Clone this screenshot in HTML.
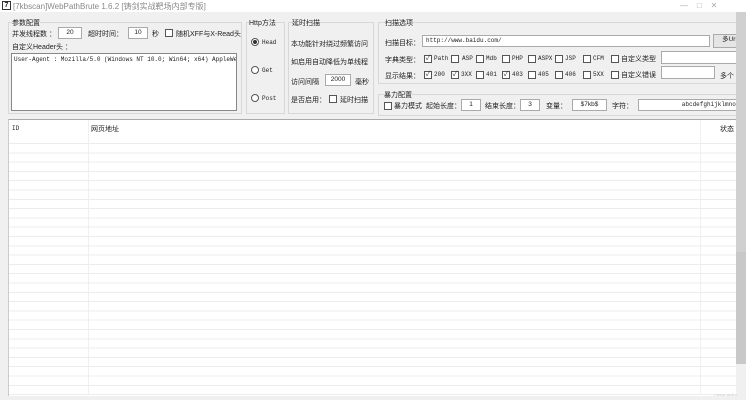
<!DOCTYPE html>
<html><head><meta charset="utf-8"><style>
*{margin:0;padding:0;box-sizing:border-box}
body{width:746px;height:400px;overflow:hidden;background:#f0f0f0;font-family:"Liberation Sans","Noto Sans CJK SC",sans-serif;font-size:7px;color:#222;position:relative}
.a{position:absolute;white-space:nowrap}
.in{position:absolute;background:#fff;border:1px solid #aaa;font-size:6.5px;text-align:center;line-height:10px}
.cb{position:absolute;width:8px;height:8px;border:1px solid #555;background:#fff;font-size:7px;line-height:6px;text-align:center;color:#333}
.rd{position:absolute;width:8px;height:8px;border:1px solid #555;border-radius:50%;background:#fff}
.grp{position:absolute;border:1px solid #d8d8d8}
.mono{font-family:"Liberation Mono","Noto Sans CJK SC",monospace;font-size:6px}
</style></head><body>
<div class="a" style="left:0;top:0;width:746px;height:12px;background:#fff"></div>
<div class="a" style="left:2px;top:1px;width:9px;height:9px;border:1px solid #333;font-size:7px;line-height:7px;text-align:center;font-weight:bold">7</div>
<div class="a" style="left:13px;top:1px;color:#888;font-size:8px">[7kbscan]WebPathBrute 1.6.2 [铸剑实战靶场内部专版]</div>
<div class="a" style="left:680px;top:1px;color:#aaa;font-size:8px">—&nbsp;&nbsp;&nbsp;&nbsp;□&nbsp;&nbsp;&nbsp;&nbsp;✕</div>

<div class="grp" style="left:8px;top:22px;width:234px;height:92px"></div>
<div class="a" style="left:12px;top:18px;background:#f0f0f0">参数配置</div>
<div class="a" style="left:12px;top:29px">并发线程数 ：</div>
<div class="in" style="left:58px;top:27px;width:24px;height:12px">20</div>
<div class="a" style="left:88px;top:29px">超时时间：</div>
<div class="in" style="left:128px;top:27px;width:20px;height:12px">10</div>
<div class="a" style="left:152px;top:29px">秒</div>
<div class="cb" style="left:165px;top:29px"></div>
<div class="a" style="left:176px;top:29px" class="mono">随机XFF与X-Read头</div>
<div class="a" style="left:12px;top:42px">自定义Header头 ：</div>
<div class="a" style="left:11px;top:53px;width:226px;height:58px;background:#fff;border:1px solid #888"></div>
<div class="a mono" style="left:14px;top:56px;width:222px;overflow:hidden">User-Agent : Mozilla/5.0 (Windows NT 10.0; Win64; x64) AppleWebKit</div>

<div class="grp" style="left:246px;top:22px;width:39px;height:92px"></div>
<div class="a" style="left:249px;top:18px;background:#f0f0f0">Http方法</div>
<div class="rd" style="left:251px;top:38px"></div><div class="a" style="left:253px;top:40px;width:4px;height:4px;border-radius:50%;background:#333"></div>
<div class="a mono" style="left:262px;top:39px">Head</div>
<div class="rd" style="left:251px;top:66px"></div><div class="a mono" style="left:262px;top:67px">Get</div>
<div class="rd" style="left:251px;top:94px"></div><div class="a mono" style="left:262px;top:95px">Post</div>

<div class="grp" style="left:288px;top:22px;width:86px;height:92px"></div>
<div class="a" style="left:292px;top:18px;background:#f0f0f0">延时扫描</div>
<div class="a" style="left:291px;top:39px">本功能针对绕过频繁访问</div>
<div class="a" style="left:291px;top:57px">如启用自动降低为单线程</div>
<div class="a" style="left:291px;top:77px">访问间隔</div>
<div class="in" style="left:325px;top:74px;width:26px;height:12px">2000</div>
<div class="a" style="left:355px;top:77px">毫秒</div>
<div class="a" style="left:291px;top:95px">是否启用：</div>
<div class="cb" style="left:329px;top:95px"></div>
<div class="a" style="left:340px;top:95px">延时扫描</div>

<div class="grp" style="left:378px;top:22px;width:362px;height:62px"></div>
<div class="a" style="left:385px;top:18px;background:#f0f0f0">扫描选项</div>
<div class="a" style="left:385px;top:38px">扫描目标：</div>
<div class="in mono" style="left:422px;top:35px;width:288px;height:12px;text-align:left;padding-left:3px">http://www.baidu.com/</div>
<div class="in" style="left:713px;top:34px;width:33px;height:14px;background:#e5e5e5">多Url</div>
<div class="a" style="left:385px;top:55px">字典类型：</div>
<div class="a" style="left:385px;top:71px">显示结果：</div>
<div class="cb" style="left:424px;top:55px">✓</div><div class="a mono" style="left:434px;top:55px">Path</div>
<div class="cb" style="left:451px;top:55px"></div><div class="a mono" style="left:462px;top:55px">ASP</div>
<div class="cb" style="left:476px;top:55px"></div><div class="a mono" style="left:486px;top:55px">Mdb</div>
<div class="cb" style="left:502px;top:55px"></div><div class="a mono" style="left:512px;top:55px">PHP</div>
<div class="cb" style="left:528px;top:55px"></div><div class="a mono" style="left:538px;top:55px">ASPX</div>
<div class="cb" style="left:555px;top:55px"></div><div class="a mono" style="left:565px;top:55px">JSP</div>
<div class="cb" style="left:583px;top:55px"></div><div class="a mono" style="left:593px;top:55px">CFM</div>
<div class="cb" style="left:611px;top:55px"></div><div class="a" style="left:621px;top:54px">自定义类型</div>
<div class="in" style="left:661px;top:51px;width:85px;height:13px"></div>
<div class="cb" style="left:424px;top:71px">✓</div><div class="a mono" style="left:434px;top:71px">200</div>
<div class="cb" style="left:451px;top:71px">✓</div><div class="a mono" style="left:461px;top:71px">3XX</div>
<div class="cb" style="left:476px;top:71px"></div><div class="a mono" style="left:486px;top:71px">401</div>
<div class="cb" style="left:502px;top:71px">✓</div><div class="a mono" style="left:512px;top:71px">403</div>
<div class="cb" style="left:528px;top:71px"></div><div class="a mono" style="left:538px;top:71px">405</div>
<div class="cb" style="left:555px;top:71px"></div><div class="a mono" style="left:565px;top:71px">406</div>
<div class="cb" style="left:583px;top:71px"></div><div class="a mono" style="left:593px;top:71px">5XX</div>
<div class="cb" style="left:611px;top:71px"></div><div class="a" style="left:621px;top:70px">自定义错误</div>
<div class="in" style="left:661px;top:66px;width:54px;height:13px"></div>
<div class="a" style="left:720px;top:71px">多个</div>

<div class="grp" style="left:378px;top:94px;width:362px;height:22px"></div>
<div class="a" style="left:384px;top:90px;background:#f0f0f0">暴力配置</div>
<div class="cb" style="left:384px;top:102px"></div><div class="a" style="left:394px;top:101px">暴力模式</div>
<div class="a" style="left:426px;top:101px">起始长度：</div>
<div class="in" style="left:461px;top:99px;width:20px;height:12px">1</div>
<div class="a" style="left:485px;top:101px">结束长度：</div>
<div class="in" style="left:520px;top:99px;width:20px;height:12px">3</div>
<div class="a" style="left:546px;top:101px">变量：</div>
<div class="in" style="left:572px;top:99px;width:35px;height:12px">$7kb$</div>
<div class="a" style="left:612px;top:101px">字符：</div>
<div class="in mono" style="left:638px;top:99px;width:108px;height:12px;text-align:right;padding-right:2px;overflow:hidden">abcdefghijklmnopq</div>

<div class="a" style="left:8px;top:119px;width:728px;height:277px;background:#fff;border-top:1px solid #aaa;border-left:1px solid #ccc"></div>
<div class="a" style="left:736px;top:12px;width:10px;height:240px;background:#d0d0d0"></div>
<div class="a" style="left:736px;top:252px;width:10px;height:112px;background:#c8c8c8"></div>
<div class="a" style="left:736px;top:364px;width:10px;height:32px;background:#f0f0f0"></div>
<div class="a mono" style="left:12px;top:125px">ID</div>
<div class="a" style="left:91px;top:124px">网页地址</div>
<div class="a" style="left:720px;top:124px">状态</div>
<div class="a" style="left:88px;top:120px;width:1px;height:275px;background:#f0f0f0"></div>
<div class="a" style="left:700px;top:120px;width:1px;height:275px;background:#f0f0f0"></div>
<div class="a" style="left:9px;top:143px;width:727px;height:252px;background:repeating-linear-gradient(to bottom,#ececec 0,#ececec 1px,transparent 1px,transparent 9.3px)"></div>
<div class="a" style="left:714px;top:393px;color:#bbb;font-size:4px">CSDN @小Y</div>
<div class="a" style="left:0;top:396px;width:746px;height:4px;background:#f0f0f0"></div>
</body></html>
